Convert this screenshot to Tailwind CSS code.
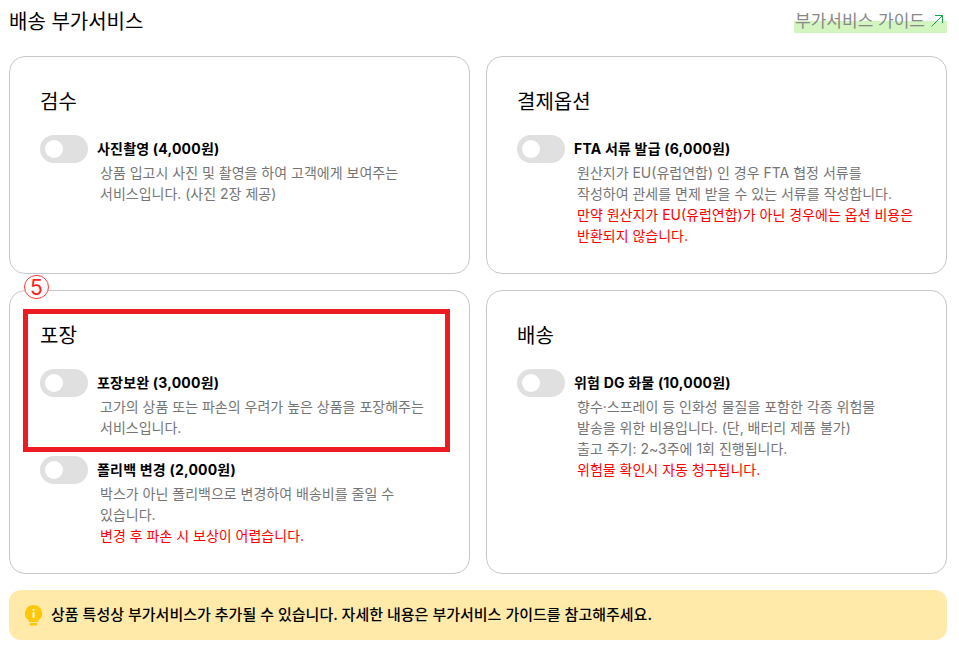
<!DOCTYPE html>
<html lang="ko">
<head>
  <meta charset="UTF-8" />
  <title>배송 부가서비스</title>
  <script src="https://cdn.jsdelivr.net/npm/@tailwindcss/browser@4"></script>
</head>
<body class="bg-white font-['Inter','Noto_Sans_CJK_KR',sans-serif] text-black">
  <div class="relative w-[959px] h-[653px] overflow-hidden pl-[9px] pr-[12px]">
    <!-- Header -->
    <div class="flex justify-between h-[56px]">
      <h1 class="text-[20px] leading-[24px] mt-[10px] font-normal">배송 부가서비스</h1>
      <a class="relative text-[17px] leading-[22px] mt-[10px] pl-[1px] pr-[4px] h-[22px] flex items-center gap-[6px] text-[#888]">
        <span class="absolute left-0 right-0 top-[11px] h-[12px] bg-[#d3f5c0]"></span>
        <span class="relative">부가서비스 가이드</span>
        <svg class="relative" width="12" height="12" viewBox="0 0 12 12" fill="none" stroke="#16a34a" stroke-width="1"><path d="M.5 11.500 11.500.5M4 .5h7.500V8"/></svg>
      </a>
    </div>

    <!-- Cards -->
    <div class="grid grid-cols-2 gap-4 grid-rows-[218px_284px]">
      <section class="border border-[#c8c8c8] rounded-[16px] pl-[30px] pr-[40px] pt-[31px]">
        <h2 class="text-[20px] leading-[28px] font-normal mb-[19px]">검수</h2>
        <div class="flex">
          <span class="w-[48px] h-[28px] rounded-full bg-[#e0e0e0] flex items-center pl-[5px] shrink-0"><span class="w-[18px] h-[18px] rounded-full bg-white"></span></span>
          <div class="ml-[9px]">
            <p class="text-[14px] leading-[27px] font-bold tracking-[0.2px]">사진촬영 (4,000원)</p>
            <p class="text-[14px] leading-[21px] text-[#757575] pl-[3px]">상품 입고시 사진 및 촬영을 하여 고객에게 보여주는<br />서비스입니다. (사진 2장 제공)</p>
          </div>
        </div>
      </section>

      <section class="border border-[#c8c8c8] rounded-[16px] pl-[30px] pr-[20px] pt-[31px]">
        <h2 class="text-[20px] leading-[28px] font-normal mb-[19px]">결제옵션</h2>
        <div class="flex">
          <span class="w-[48px] h-[28px] rounded-full bg-[#e0e0e0] flex items-center pl-[5px] shrink-0"><span class="w-[18px] h-[18px] rounded-full bg-white"></span></span>
          <div class="ml-[9px]">
            <p class="text-[14px] leading-[27px] font-bold tracking-[0.2px]">FTA 서류 발급 (6,000원)</p>
            <p class="text-[14px] leading-[21px] text-[#757575] pl-[3px]">원산지가 EU(유럽연합) 인 경우 FTA 협정 서류를<br />작성하여 관세를 면제 받을 수 있는 서류를 작성합니다.<br /><span class="text-[#ff0000]">만약 원산지가 EU(유럽연합)가 아닌 경우에는 옵션 비용은<br />반환되지 않습니다.</span></p>
          </div>
        </div>
      </section>

      <section class="border border-[#c8c8c8] rounded-[16px] pl-[30px] pr-[40px] pt-[31px]">
        <h2 class="text-[20px] leading-[28px] font-normal mb-[19px]">포장</h2>
        <div class="flex">
          <span class="w-[48px] h-[28px] rounded-full bg-[#e0e0e0] flex items-center pl-[5px] shrink-0"><span class="w-[18px] h-[18px] rounded-full bg-white"></span></span>
          <div class="ml-[9px]">
            <p class="text-[14px] leading-[27px] font-bold tracking-[0.2px]">포장보완 (3,000원)</p>
            <p class="text-[14px] leading-[21px] text-[#757575] pl-[3px]">고가의 상품 또는 파손의 우려가 높은 상품을 포장해주는<br />서비스입니다.</p>
          </div>
        </div>
        <div class="flex mt-[18px]">
          <span class="w-[48px] h-[28px] rounded-full bg-[#e0e0e0] flex items-center pl-[5px] shrink-0"><span class="w-[18px] h-[18px] rounded-full bg-white"></span></span>
          <div class="ml-[9px]">
            <p class="text-[14px] leading-[27px] font-bold tracking-[0.2px]">폴리백 변경 (2,000원)</p>
            <p class="text-[14px] leading-[21px] text-[#757575] pl-[3px]">박스가 아닌 폴리백으로 변경하여 배송비를 줄일 수<br />있습니다.<br /><span class="text-[#ff0000]">변경 후 파손 시 보상이 어렵습니다.</span></p>
          </div>
        </div>
      </section>

      <section class="border border-[#c8c8c8] rounded-[16px] pl-[30px] pr-[20px] pt-[31px]">
        <h2 class="text-[20px] leading-[28px] font-normal mb-[19px]">배송</h2>
        <div class="flex">
          <span class="w-[48px] h-[28px] rounded-full bg-[#e0e0e0] flex items-center pl-[5px] shrink-0"><span class="w-[18px] h-[18px] rounded-full bg-white"></span></span>
          <div class="ml-[9px]">
            <p class="text-[14px] leading-[27px] font-bold tracking-[0.2px]">위험 DG 화물 (10,000원)</p>
            <p class="text-[14px] leading-[21px] text-[#757575] pl-[3px]">향수·스프레이 등 인화성 물질을 포함한 각종 위험물<br />발송을 위한 비용입니다. (단, 배터리 제품 불가)<br />출고 주기: 2~3주에 1회 진행됩니다.<br /><span class="text-[#ff0000]">위험물 확인시 자동 청구됩니다.</span></p>
          </div>
        </div>
      </section>
    </div>

    <!-- Notice -->
    <div class="mt-[16px] h-[50px] rounded-[12px] bg-[#ffeaa9] flex items-center pl-[16px] gap-[9px]">
      <svg width="17" height="21" viewBox="0 0 18 22"><path fill="#ffc60a" d="M9 0a9 9 0 0 1 5 16.500V17a1 1 0 0 1-1 1H5a1 1 0 0 1-1-1v-.5A9 9 0 0 1 9 0ZM5 19h8v1.500a1 1 0 0 1-1 1H6a1 1 0 0 1-1-1Z"/><path fill="#fff" d="M8 4h2v2H8zM8 7.500h2V13H8z"/></svg>
      <p class="text-[15px] leading-[20px] font-medium">상품 특성상 부가서비스가 추가될 수 있습니다. 자세한 내용은 부가서비스 가이드를 참고해주세요.</p>
    </div>

    <!-- Annotation overlay -->
    <div class="absolute left-[23px] top-[309px] w-[427px] h-[143px] border-[5px] border-[#ed1c24]"></div>
    <div class="absolute left-[24px] top-[275px] w-[25px] h-[24px] rounded-full border border-[#ff3b3b] bg-white flex items-center justify-center text-[21px] leading-none text-[#ff2020]">5</div>
  </div>
</body>
</html>
